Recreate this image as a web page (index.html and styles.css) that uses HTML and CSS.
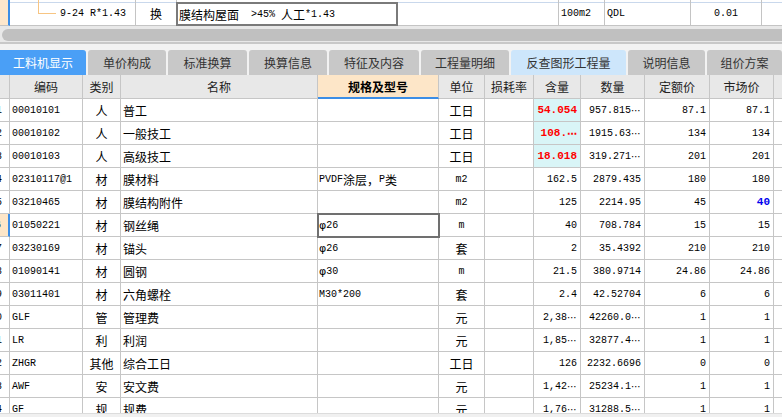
FILE: index.html
```html
<!DOCTYPE html>
<html lang="zh-CN">
<head>
<meta charset="utf-8">
<title>工料机显示</title>
<link rel="stylesheet" href="styles.css">
</head>
<body>
<div class="page">
  <div class="toprow">
    <div class="tc tmark"></div>
    <div class="tc tcode"><span class="mono">9-24 R*1.43</span></div>
    <div class="tc ttype">换</div>
    <div class="tc tname"></div>
    <div class="tc tunit"><span class="mono">100m2</span></div>
    <div class="tc tq"><span class="mono">QDL</span></div>
    <div class="tc tval"><span class="mono">0.01</span></div>
    <div class="tc tend"></div>
    <span class="tree"></span>
    <div class="editor">膜结构屋面<span class="mono">  &gt;45% </span>人工<span class="mono">*1.43</span></div>
  </div>

  <div class="hscroll">
    <div class="track"><div class="thumb"></div></div>
  </div>

  <div class="tabs">
    <div class="tab active t1">工料机显示</div>
    <div class="tab t2">单价构成</div>
    <div class="tab t3">标准换算</div>
    <div class="tab t4">换算信息</div>
    <div class="tab t5">特征及内容</div>
    <div class="tab t6">工程量明细</div>
    <div class="tab light t7">反查图形工程量</div>
    <div class="tab t8">说明信息</div>
    <div class="tab t9">组价方案</div>
  </div>

  <div class="row hdr">
    <div class="rn"></div>
    <div class="ctr">编码</div>
    <div class="ctr">类别</div>
    <div class="ctr">名称</div>
    <div class="ctr spec-h">规格及型号</div>
    <div class="ctr">单位</div>
    <div class="ctr">损耗率</div>
    <div class="ctr">含量</div>
    <div class="ctr">数量</div>
    <div class="ctr">定额价</div>
    <div class="ctr">市场价</div>
    <div class="end"></div>
  </div>

  <div class="rows">
    <div class="row">
      <div class="rn">1</div>
      <div class="code">00010101</div>
      <div class="ctr">人</div>
      <div class="name">普工</div>
      <div class="spec"></div>
      <div class="ctr">工日</div>
      <div></div>
      <div class="num hl red">54.054</div>
      <div class="num">957.815<span class="el">⋯</span></div>
      <div class="num">87.1</div>
      <div class="num">87.1</div>
      <div class="end"></div>
    </div>
    <div class="row">
      <div class="rn">2</div>
      <div class="code">00010102</div>
      <div class="ctr">人</div>
      <div class="name">一般技工</div>
      <div class="spec"></div>
      <div class="ctr">工日</div>
      <div></div>
      <div class="num hl red">108.<span class="el">⋯</span></div>
      <div class="num">1915.63<span class="el">⋯</span></div>
      <div class="num">134</div>
      <div class="num">134</div>
      <div class="end"></div>
    </div>
    <div class="row">
      <div class="rn">3</div>
      <div class="code">00010103</div>
      <div class="ctr">人</div>
      <div class="name">高级技工</div>
      <div class="spec"></div>
      <div class="ctr">工日</div>
      <div></div>
      <div class="num hl red">18.018</div>
      <div class="num">319.271<span class="el">⋯</span></div>
      <div class="num">201</div>
      <div class="num">201</div>
      <div class="end"></div>
    </div>
    <div class="row">
      <div class="rn">4</div>
      <div class="code">02310117@1</div>
      <div class="ctr">材</div>
      <div class="name">膜材料</div>
      <div class="spec"><span class="mono">PVDF</span>涂层，<span class="mono">P</span>类</div>
      <div class="ctr mono">m2</div>
      <div></div>
      <div class="num">162.5</div>
      <div class="num">2879.435</div>
      <div class="num">180</div>
      <div class="num">180</div>
      <div class="end"></div>
    </div>
    <div class="row">
      <div class="rn">5</div>
      <div class="code">03210465</div>
      <div class="ctr">材</div>
      <div class="name">膜结构附件</div>
      <div class="spec"></div>
      <div class="ctr mono">m2</div>
      <div></div>
      <div class="num">125</div>
      <div class="num">2214.95</div>
      <div class="num">45</div>
      <div class="num blue">40</div>
      <div class="end"></div>
    </div>
    <div class="row">
      <div class="rn cur">6</div>
      <div class="code">01050221</div>
      <div class="ctr">材</div>
      <div class="name">钢丝绳</div>
      <div class="spec sel"><span class="phi">φ</span><span class="mono">26</span></div>
      <div class="ctr mono">m</div>
      <div></div>
      <div class="num">40</div>
      <div class="num">708.784</div>
      <div class="num">15</div>
      <div class="num">15</div>
      <div class="end"></div>
    </div>
    <div class="row">
      <div class="rn">7</div>
      <div class="code">03230169</div>
      <div class="ctr">材</div>
      <div class="name">锚头</div>
      <div class="spec"><span class="phi">φ</span><span class="mono">26</span></div>
      <div class="ctr">套</div>
      <div></div>
      <div class="num">2</div>
      <div class="num">35.4392</div>
      <div class="num">210</div>
      <div class="num">210</div>
      <div class="end"></div>
    </div>
    <div class="row">
      <div class="rn">8</div>
      <div class="code">01090141</div>
      <div class="ctr">材</div>
      <div class="name">圆钢</div>
      <div class="spec"><span class="phi">φ</span><span class="mono">30</span></div>
      <div class="ctr mono">m</div>
      <div></div>
      <div class="num">21.5</div>
      <div class="num">380.9714</div>
      <div class="num">24.86</div>
      <div class="num">24.86</div>
      <div class="end"></div>
    </div>
    <div class="row">
      <div class="rn">9</div>
      <div class="code">03011401</div>
      <div class="ctr">材</div>
      <div class="name">六角螺栓</div>
      <div class="spec"><span class="mono">M30*200</span></div>
      <div class="ctr">套</div>
      <div></div>
      <div class="num">2.4</div>
      <div class="num">42.52704</div>
      <div class="num">6</div>
      <div class="num">6</div>
      <div class="end"></div>
    </div>
    <div class="row">
      <div class="rn">10</div>
      <div class="code">GLF</div>
      <div class="ctr">管</div>
      <div class="name">管理费</div>
      <div class="spec"></div>
      <div class="ctr">元</div>
      <div></div>
      <div class="num">2,38<span class="el">⋯</span></div>
      <div class="num">42260.0<span class="el">⋯</span></div>
      <div class="num">1</div>
      <div class="num">1</div>
      <div class="end"></div>
    </div>
    <div class="row">
      <div class="rn">11</div>
      <div class="code">LR</div>
      <div class="ctr">利</div>
      <div class="name">利润</div>
      <div class="spec"></div>
      <div class="ctr">元</div>
      <div></div>
      <div class="num">1,85<span class="el">⋯</span></div>
      <div class="num">32877.4<span class="el">⋯</span></div>
      <div class="num">1</div>
      <div class="num">1</div>
      <div class="end"></div>
    </div>
    <div class="row">
      <div class="rn">12</div>
      <div class="code">ZHGR</div>
      <div class="ctr">其他</div>
      <div class="name">综合工日</div>
      <div class="spec"></div>
      <div class="ctr">工日</div>
      <div></div>
      <div class="num">126</div>
      <div class="num">2232.6696</div>
      <div class="num">0</div>
      <div class="num">0</div>
      <div class="end"></div>
    </div>
    <div class="row">
      <div class="rn">13</div>
      <div class="code">AWF</div>
      <div class="ctr">安</div>
      <div class="name">安文费</div>
      <div class="spec"></div>
      <div class="ctr">元</div>
      <div></div>
      <div class="num">1,42<span class="el">⋯</span></div>
      <div class="num">25234.1<span class="el">⋯</span></div>
      <div class="num">1</div>
      <div class="num">1</div>
      <div class="end"></div>
    </div>
    <div class="row">
      <div class="rn">14</div>
      <div class="code">GF</div>
      <div class="ctr">规</div>
      <div class="name">规费</div>
      <div class="spec"></div>
      <div class="ctr">元</div>
      <div></div>
      <div class="num">1,76<span class="el">⋯</span></div>
      <div class="num">31288.5<span class="el">⋯</span></div>
      <div class="num">1</div>
      <div class="num">1</div>
      <div class="end"></div>
    </div>
  </div>
  <div class="band"></div>
</div>
</body>
</html>
```

FILE: styles.css
```css
html, body {
  margin: 0;
  padding: 0;
}
body {
  width: 782px;
  height: 417px;
  overflow: hidden;
  background: #ffffff;
  font-family: "Noto Sans CJK SC", sans-serif;
  font-size: 12px;
  color: #000;
}
.page {
  width: 782px;
  height: 417px;
  display: flex;
  flex-direction: column;
  overflow: hidden;
}
.mono {
  font-family: "Liberation Mono", "Noto Sans CJK SC", monospace;
  font-size: 10px;
}
.phi {
  font-family: "DejaVu Sans", sans-serif;
  font-size: 11px;
}

/* top row */
.toprow {
  position: relative;
  display: grid;
  grid-template-columns: 10px 126px 41px 382px 46px 86px 71px 1fr;
  height: 26px;
  flex: none;
  background: linear-gradient(to bottom, transparent 2px, #c9d8ec 2px, #c9d8ec 3px, transparent 3px);
}
.tc {
  box-sizing: border-box;
  border-right: 1px solid #c4c4c4;
  border-bottom: 1px solid #c4c4c4;
  display: flex;
  align-items: center;
  white-space: pre;
  padding-top: 2px;
}
.tmark {
  background: #fde7cc;
  border-right: 2px solid #3c8ee6;
}
.tcode { padding-left: 50px; }
.ttype { justify-content: center; }
.tunit, .tq { padding-left: 2px; }
.tval { justify-content: center; }
.tend { border-right: none; }
.tree {
  position: absolute;
  left: 38px;
  top: 0;
  width: 17px;
  height: 13px;
  border-left: 1px solid #f7c583;
  border-bottom: 1px solid #f7c583;
}
.editor {
  position: absolute;
  left: 176px;
  top: 2px;
  width: 222px;
  height: 24px;
  box-sizing: border-box;
  border: 2px solid #7a7a7a;
  background: #fff;
  padding-left: 1px;
  display: flex;
  align-items: center;
  white-space: pre;
}

/* horizontal scrollbar */
.hscroll {
  height: 24px;
  flex: none;
  background: #f2f2f2;
}
.track {
  height: 18px;
  box-sizing: border-box;
  background: #e8e8e8;
  padding: 3px 0 0 2px;
  border-bottom: 2px solid #c8c8c8;
}
.thumb {
  height: 12px;
  background: #c0c0c0;
  border-radius: 6px 0 0 6px;
}

/* tabs */
.tabs {
  height: 25px;
  flex: none;
  display: flex;
  gap: 2px;
  background: #f2f2f2;
}
.tab {
  box-sizing: border-box;
  height: 25px;
  flex: none;
  display: flex;
  align-items: center;
  justify-content: center;
  background: #c8c8c8;
  color: #333;
  border-radius: 3px 3px 0 0;
  font-size: 12px;
}
.tab.active { background: #4a9ff6; color: #fff; border-radius: 0 3px 0 0; }
.tab.light { background: #cde6fb; }
.t1 { width: 86px; }
.t2 { width: 78px; }
.t3 { width: 79px; }
.t4 { width: 78px; }
.t5 { width: 90px; }
.t6 { width: 88px; }
.t7 { width: 115px; }
.t8 { width: 77px; }
.t9 { flex: 1; }

/* grid */
.row {
  display: grid;
  grid-template-columns: 10px 73px 38px 197px 121px 46px 49px 47px 64px 65px 64px 1fr;
  height: 23px;
  flex: none;
}
.row > div {
  box-sizing: border-box;
  border-right: 1px solid #c6c6c6;
  border-bottom: 1px solid #c6c6c6;
  display: flex;
  align-items: center;
  overflow: hidden;
  white-space: nowrap;
}
.row > div.end { border-right: none; }
.hdr {
  height: 24px;
  background: #e8e8e8;
  color: #222;
}
.hdr > div.spec-h {
  background: #fde6c8;
  font-weight: bold;
  border-bottom: 2px solid #3c8ee6;
  color: #000;
}
.rows {
  height: 314px;
  flex: none;
  overflow: hidden;
}
.ctr { justify-content: center; }
.rn {
  direction: rtl;
  padding-right: 7px;
  font-family: "Liberation Mono", monospace;
  font-size: 10px;
  color: #000;
}
.row > div.rn.cur {
  background: #fde6c8;
  border-right: 2px solid #3c8ee6;
}
.code {
  padding-left: 2px;
  font-family: "Liberation Mono", monospace;
  font-size: 10px;
}
.name { padding-left: 2px; }
.spec { padding-left: 1px; }
.num {
  justify-content: flex-end;
  padding-right: 3px;
  font-family: "Liberation Mono", monospace;
  font-size: 10px;
}
.el {
  font-family: "DejaVu Sans", sans-serif;
  font-size: 10px;
}
.hl { background: #d9f5f7; }
.red {
  color: #ff0000;
  font-weight: bold;
  font-size: 11px;
}
.blue {
  color: #0000ee;
  font-weight: bold;
  font-size: 11px;
}
.row > div.sel {
  outline: 2px solid #707070;
  outline-offset: -1px;
  position: relative;
  z-index: 1;
}
.band {
  flex: 1;
  background: #f0f0f0;
  border-top: 1px solid #dcdcdc;
}
```
